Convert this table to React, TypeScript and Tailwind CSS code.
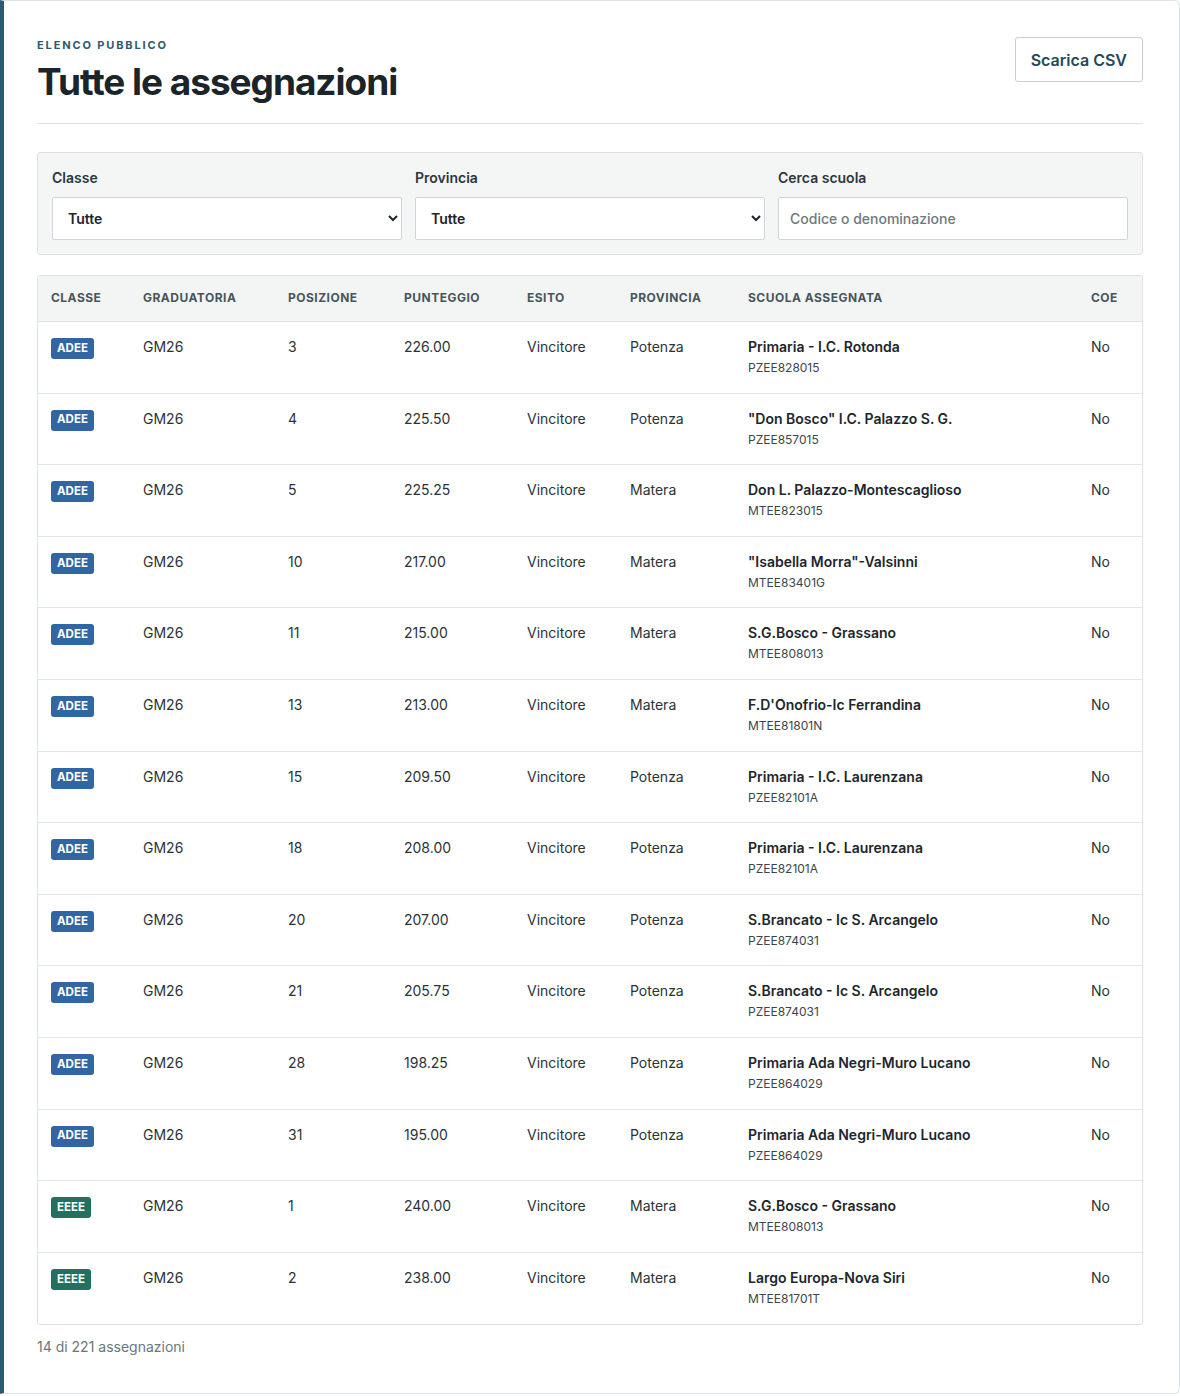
import { useState } from 'react';

type Row = {
    classe: string;
    graduatoria: string;
    posizione: number;
    punteggio: string;
    esito: string;
    provincia: string;
    scuola: string;
    codice: string;
    coe: string;
};

const rows: Row[] = [
    { classe: 'ADEE', graduatoria: 'GM26', posizione: 3, punteggio: '226.00', esito: 'Vincitore', provincia: 'Potenza', scuola: 'Primaria - I.C. Rotonda', codice: 'PZEE828015', coe: 'No' },
    { classe: 'ADEE', graduatoria: 'GM26', posizione: 4, punteggio: '225.50', esito: 'Vincitore', provincia: 'Potenza', scuola: '"Don Bosco" I.C. Palazzo S. G.', codice: 'PZEE857015', coe: 'No' },
    { classe: 'ADEE', graduatoria: 'GM26', posizione: 5, punteggio: '225.25', esito: 'Vincitore', provincia: 'Matera', scuola: 'Don L. Palazzo-Montescaglioso', codice: 'MTEE823015', coe: 'No' },
    { classe: 'ADEE', graduatoria: 'GM26', posizione: 10, punteggio: '217.00', esito: 'Vincitore', provincia: 'Matera', scuola: '"Isabella Morra"-Valsinni', codice: 'MTEE83401G', coe: 'No' },
    { classe: 'ADEE', graduatoria: 'GM26', posizione: 11, punteggio: '215.00', esito: 'Vincitore', provincia: 'Matera', scuola: 'S.G.Bosco - Grassano', codice: 'MTEE808013', coe: 'No' },
    { classe: 'ADEE', graduatoria: 'GM26', posizione: 13, punteggio: '213.00', esito: 'Vincitore', provincia: 'Matera', scuola: "F.D'Onofrio-Ic Ferrandina", codice: 'MTEE81801N', coe: 'No' },
    { classe: 'ADEE', graduatoria: 'GM26', posizione: 15, punteggio: '209.50', esito: 'Vincitore', provincia: 'Potenza', scuola: 'Primaria - I.C. Laurenzana', codice: 'PZEE82101A', coe: 'No' },
    { classe: 'ADEE', graduatoria: 'GM26', posizione: 18, punteggio: '208.00', esito: 'Vincitore', provincia: 'Potenza', scuola: 'Primaria - I.C. Laurenzana', codice: 'PZEE82101A', coe: 'No' },
    { classe: 'ADEE', graduatoria: 'GM26', posizione: 20, punteggio: '207.00', esito: 'Vincitore', provincia: 'Potenza', scuola: 'S.Brancato - Ic S. Arcangelo', codice: 'PZEE874031', coe: 'No' },
    { classe: 'ADEE', graduatoria: 'GM26', posizione: 21, punteggio: '205.75', esito: 'Vincitore', provincia: 'Potenza', scuola: 'S.Brancato - Ic S. Arcangelo', codice: 'PZEE874031', coe: 'No' },
    { classe: 'ADEE', graduatoria: 'GM26', posizione: 28, punteggio: '198.25', esito: 'Vincitore', provincia: 'Potenza', scuola: 'Primaria Ada Negri-Muro Lucano', codice: 'PZEE864029', coe: 'No' },
    { classe: 'ADEE', graduatoria: 'GM26', posizione: 31, punteggio: '195.00', esito: 'Vincitore', provincia: 'Potenza', scuola: 'Primaria Ada Negri-Muro Lucano', codice: 'PZEE864029', coe: 'No' },
    { classe: 'EEEE', graduatoria: 'GM26', posizione: 1, punteggio: '240.00', esito: 'Vincitore', provincia: 'Matera', scuola: 'S.G.Bosco - Grassano', codice: 'MTEE808013', coe: 'No' },
    { classe: 'EEEE', graduatoria: 'GM26', posizione: 2, punteggio: '238.00', esito: 'Vincitore', provincia: 'Matera', scuola: 'Largo Europa-Nova Siri', codice: 'MTEE81701T', coe: 'No' },
];

const headers = [
    { label: 'Classe', w: 'w-[92px]' },
    { label: 'Graduatoria', w: 'w-[145px]' },
    { label: 'Posizione', w: 'w-[116px]' },
    { label: 'Punteggio', w: 'w-[123px]' },
    { label: 'Esito', w: 'w-[103px]' },
    { label: 'Provincia', w: 'w-[118px]' },
    { label: 'Scuola assegnata', w: 'w-[343px]' },
    { label: 'Coe', w: 'w-[64px]' },
];

const App = () => {
    const [classe, setClasse] = useState('');
    const [provincia, setProvincia] = useState('');
    const [query, setQuery] = useState('');

    return (
        <div className="min-h-screen bg-white font-['Inter',sans-serif] text-[#1c262b]">
            <div className="rounded-r-md border border-[#dde3e6] border-l-4 border-l-[#2d5a70] pl-[33px] pr-9 pt-9 pb-[36px]">
                {/* Intestazione */}
                <div className="flex items-start justify-between border-b border-[#dde2e4] pb-[18px]">
                    <div>
                        <div className="text-[11px] font-bold uppercase tracking-[0.17em] text-[#2d5a70]">Elenco pubblico</div>
                        <h1 className="mt-[5px] text-[37px] font-bold leading-[46px] tracking-[-0.028em] text-[#1a2429]">Tutte le assegnazioni</h1>
                    </div>
                    <button className="h-[45px] rounded-[3px] border border-[#c6cfd3] bg-white px-[15px] text-[16px] font-semibold text-[#24485a]">
                        Scarica CSV
                    </button>
                </div>

                {/* Filtri */}
                <div className="mt-7 grid grid-cols-3 gap-[13px] rounded-[3px] border border-[#dde3e5] bg-[#f4f6f6] p-[14px]">
                    <label className="flex flex-col">
                        <span className="mb-[9px] text-[14px] font-semibold text-[#2b373d]">Classe</span>
                        <select
                            value={classe}
                            onChange={e => setClasse(e.target.value)}
                            className="h-[43px] rounded-[2px] border border-[#cfd6da] bg-white pl-[11px] pr-3 text-[14px] font-semibold text-[#1c262b]"
                        >
                            <option value="">Tutte</option>
                            <option value="ADEE">ADEE</option>
                            <option value="EEEE">EEEE</option>
                        </select>
                    </label>
                    <label className="flex flex-col">
                        <span className="mb-[9px] text-[14px] font-semibold text-[#2b373d]">Provincia</span>
                        <select
                            value={provincia}
                            onChange={e => setProvincia(e.target.value)}
                            className="h-[43px] rounded-[2px] border border-[#cfd6da] bg-white pl-[11px] pr-3 text-[14px] font-semibold text-[#1c262b]"
                        >
                            <option value="">Tutte</option>
                            <option value="Matera">Matera</option>
                            <option value="Potenza">Potenza</option>
                        </select>
                    </label>
                    <label className="flex flex-col">
                        <span className="mb-[9px] text-[14px] font-semibold text-[#2b373d]">Cerca scuola</span>
                        <input
                            value={query}
                            onChange={e => setQuery(e.target.value)}
                            placeholder="Codice o denominazione"
                            className="h-[43px] rounded-[2px] border border-[#cfd6da] bg-white px-[11px] text-[14px] font-medium text-[#1c262b] placeholder:text-[#6f787c]"
                        />
                    </label>
                </div>

                {/* Tabella */}
                <div className="mt-5 overflow-hidden rounded-[3px] border border-[#dde3e5]">
                    <table className="w-full table-fixed border-collapse text-left">
                        <thead>
                            <tr className="h-[46px] border-b border-[#dde3e5] bg-[#f3f5f5]">
                                {headers.map(h => (
                                    <th key={h.label} className={`${h.w} px-[13px] text-[12px] font-bold uppercase tracking-[0.04em] text-[#47555b]`}>
                                        {h.label}
                                    </th>
                                ))}
                            </tr>
                        </thead>
                        <tbody>
                            {rows.map((r, i) => (
                                <tr key={i} className="h-[71.6px] border-b border-[#e1e6e8] align-top last:border-b-0">
                                    <td className="px-[13px] pt-[16px]">
                                        <span
                                            className={`flex h-[21px] w-fit items-center rounded-[3px] px-[6px] text-[11.5px] font-bold text-white ${r.classe === 'EEEE' ? 'bg-[#23705f]' : 'bg-[#3266a3]'}`}
                                        >
                                            {r.classe}
                                        </span>
                                    </td>
                                    <td className="px-[13px] pt-[14px] text-[14px] text-[#2a3338]">{r.graduatoria}</td>
                                    <td className="px-[13px] pt-[14px] text-[14px] text-[#2a3338]">{r.posizione}</td>
                                    <td className="px-[13px] pt-[14px] text-[14px] text-[#2a3338]">{r.punteggio}</td>
                                    <td className="px-[13px] pt-[14px] text-[14px] text-[#2a3338]">{r.esito}</td>
                                    <td className="px-[13px] pt-[14px] text-[14px] text-[#2a3338]">{r.provincia}</td>
                                    <td className="px-[13px] pt-[14px]">
                                        <div className="text-[14px] font-semibold text-[#1c262b]">{r.scuola}</div>
                                        <div className="mt-[2px] text-[12px] text-[#3b464b]">{r.codice}</div>
                                    </td>
                                    <td className="px-[13px] pt-[14px] text-[14px] text-[#2a3338]">{r.coe}</td>
                                </tr>
                            ))}
                        </tbody>
                    </table>
                </div>

                <div className="mt-[11px] text-[14px] text-[#6a777d]">14 di 221 assegnazioni</div>
            </div>
        </div>
    );
};

export default App;
